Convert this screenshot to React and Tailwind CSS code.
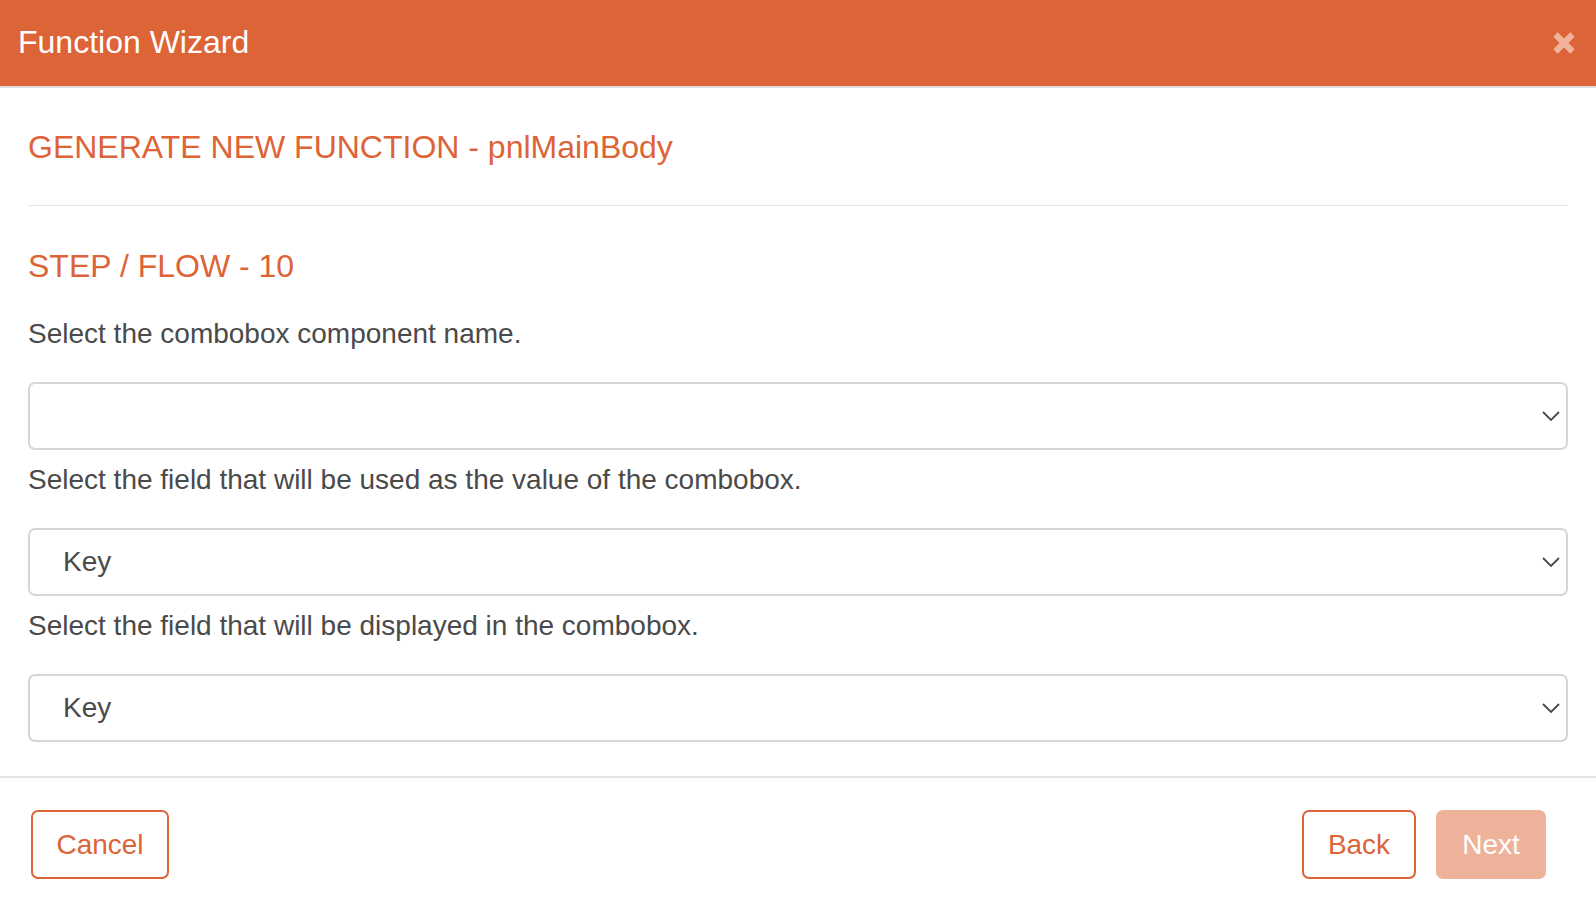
import { useState } from "react";

const ORANGE = "text-[#dc6437]";

const fields = [
  { label: "Select the combobox component name.", value: "", options: ["", "cmbCustomer", "cmbProduct"] },
  { label: "Select the field that will be used as the value of the combobox.", value: "Key", options: ["Key", "Value"] },
  { label: "Select the field that will be displayed in the combobox.", value: "Key", options: ["Key", "Value"] },
];

const Chevron = () => (
  <svg
    className="absolute right-[8px] top-1/2 -translate-y-1/2 pointer-events-none"
    width="18"
    height="10"
    viewBox="0 0 18 10"
    fill="none"
  >
    <path d="M1 1l8 8 8-8" stroke="#4a4a4a" strokeWidth="1.8" />
  </svg>
);

const WizardSelect = ({ field }) => {
  const [value, setValue] = useState(field.value);
  return (
    <div className="relative">
      <select
        value={value}
        onChange={(e) => setValue(e.target.value)}
        className="appearance-none w-full h-[68px] pl-[33px] pr-12 rounded-[7px] border-2 border-[#d3d6da] bg-white text-[28px] text-[#4a4a4a] outline-none"
      >
        {field.options.map((o) => (
          <option key={o} value={o}>
            {o}
          </option>
        ))}
      </select>
      <Chevron />
    </div>
  );
};

export default function App() {
  return (
    <div className="w-[1596px] h-[908px] bg-white font-['Liberation_Sans',Arial,sans-serif] overflow-hidden">
      {/* Header */}
      <div className="h-[86px] bg-[#dc6437] flex items-center justify-between pl-[18px] pr-[20px]">
        <div className="text-white text-[32px] leading-none -mt-[2px]">Function Wizard</div>
        <button aria-label="Close" className="w-6 h-6 flex items-center justify-center">
          <svg width="24" height="24" viewBox="0 0 24 24">
            <path d="M3.5 3.5l17 17M20.5 3.5l-17 17" stroke="#f1b39c" strokeWidth="6.2" />
          </svg>
        </button>
      </div>
      <div className="h-[2px] bg-[#dcdcdc]"></div>

      {/* Body */}
      <div className="px-[28px] pt-[41px] pb-[34px]">
        <h1 className={`${ORANGE} text-[32px] leading-[36px]`}>GENERATE NEW FUNCTION - pnlMainBody</h1>
        <div className="mt-[40px] border-t border-[#e5e5e5]"></div>
        <h2 className={`${ORANGE} text-[32px] leading-[36px] mt-[42px]`}>STEP / FLOW - 10</h2>

        <div className="mt-[20px] flex flex-col">
          {fields.map((f) => (
            <div key={f.label}>
              <div className="mt-[10px] mb-[28px] text-[28px] leading-[40px] text-[#4a4a4a]">{f.label}</div>
              <WizardSelect field={f} />
            </div>
          ))}
        </div>
      </div>

      {/* Footer */}
      <div className="border-t-2 border-[#e3e5e8] pt-[32px] pl-[31px] pr-[50px] flex items-center justify-between">
        <button className="h-[69px] w-[138px] rounded-[7px] border-2 border-[#dc6437] text-[#dc6437] text-[28px]">
          Cancel
        </button>
        <div className="flex gap-[20px]">
          <button className="h-[69px] w-[114px] rounded-[7px] border-2 border-[#dc6437] text-[#dc6437] text-[28px]">
            Back
          </button>
          <button disabled className="h-[69px] w-[110px] rounded-[7px] bg-[#eeb29b] text-white text-[28px]">
            Next
          </button>
        </div>
      </div>
    </div>
  );
}
